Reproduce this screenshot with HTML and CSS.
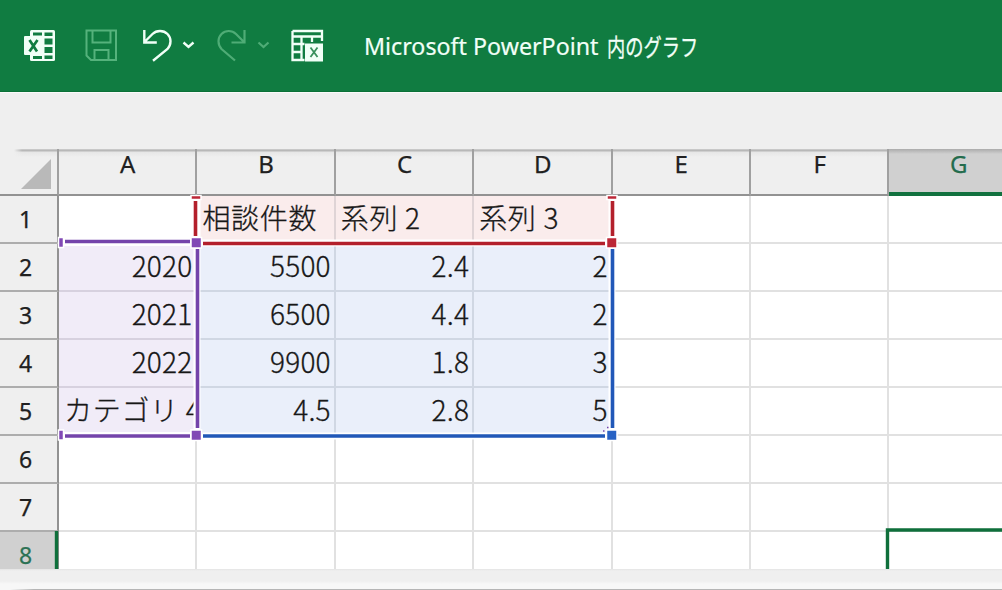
FILE: index.html
```html
<!DOCTYPE html>
<html lang="ja">
<head>
<meta charset="utf-8">
<title>Microsoft PowerPoint 内のグラフ</title>
<link rel="stylesheet" href="styles.css">
</head>
<body>
<div class="window">
  <header class="titlebar">
    <svg class="tools" width="340" height="91" viewBox="0 0 340 91" fill="none">
      <g class="excel">
        <rect x="30" y="30" width="25" height="31" rx="1.5" fill="#f1fff7"/>
        <path d="M33 32.5h9v3h-9zM44.500 32.500h8v3.500h-8zM44.500 38.500h8v6h-8zM44.500 47h8v6h-8zM44.500 55.500h8v3.500h-8zM33 56h9v3h-9z" fill="#107c41"/>
        <rect x="24" y="36" width="19" height="19" rx="1" fill="#f1fff7"/>
        <path d="M29.500 40l7.500 11.500M37.500 40l-8 11.500" stroke="#107c41" stroke-width="2.700"/>
      </g>
      <path d="M86.500 30.500h29.500v29.500h-25l-4.500-4.500zM92.500 30.500v12h18v-12M94.500 60v-10h14v10" stroke="#55b27c" stroke-width="2"/>
      <g stroke="#f1fff7" stroke-width="2.400">
        <path d="M144.300 30v12.500h12.500M144.500 42l8-8c4-4 11-4 15 0s4 10.500 0 15l-14.500 11.800"/>
        <path d="M183.500 42.500l5 4.500 5-4.500"/>
      </g>
      <g stroke="#4fac76" stroke-width="2.200">
        <path d="M244.500 30v12.500h-13M244 42l-8-8c-4-4-10.500-4-14.500 0s-4 10.500 0 15l13.500 11.500"/>
        <path d="M258.500 42.500l5 4.500 5-4.500"/>
      </g>
      <path d="M292.500 31h29.500v10M292.500 31v29h12M292.500 36.500h29.500M301.500 36.500v23.500M292.500 44h12M292.500 52h10M312 42v-5" stroke="#f1fff7" stroke-width="2.300"/>
      <rect x="305" y="43.500" width="18" height="18" fill="#f1fff7"/>
      <path d="M310.500 47.500l7 9.500M317.500 47.500l-7 9.500" stroke="#38905c" stroke-width="1.800"/>
    </svg>
    <h1 class="title"><span class="title-latin">Microsoft PowerPoint</span><span class="title-kana">内のグラフ</span></h1>
  </header>
  <div class="band"></div>
  <main class="sheet">
    <div class="corner"><svg width="30" height="30" viewBox="0 0 30 30"><path d="M0 30L30 0v30z" fill="#b9b9b9"/></svg></div>
    <div class="col">A</div><div class="col">B</div><div class="col">C</div><div class="col">D</div><div class="col">E</div><div class="col">F</div><div class="col active last">G</div>
    <div class="row">1</div><div class="cell"></div><div class="cell red text">相談件数</div><div class="cell red text">系列 2</div><div class="cell red text">系列 3</div><div class="cell"></div><div class="cell"></div><div class="cell open"></div>
    <div class="row">2</div><div class="cell purple">2020</div><div class="cell blue">5500</div><div class="cell blue">2.4</div><div class="cell blue">2</div><div class="cell"></div><div class="cell"></div><div class="cell open"></div>
    <div class="row">3</div><div class="cell purple">2021</div><div class="cell blue">6500</div><div class="cell blue">4.4</div><div class="cell blue">2</div><div class="cell"></div><div class="cell"></div><div class="cell open"></div>
    <div class="row">4</div><div class="cell purple">2022</div><div class="cell blue">9900</div><div class="cell blue">1.8</div><div class="cell blue">3</div><div class="cell"></div><div class="cell"></div><div class="cell open"></div>
    <div class="row">5</div><div class="cell purple text">カテゴリ 4</div><div class="cell blue">4.5</div><div class="cell blue">2.8</div><div class="cell blue">5</div><div class="cell"></div><div class="cell"></div><div class="cell open"></div>
    <div class="row">6</div><div class="cell"></div><div class="cell"></div><div class="cell"></div><div class="cell"></div><div class="cell"></div><div class="cell"></div><div class="cell open"></div>
    <div class="row">7</div><div class="cell"></div><div class="cell"></div><div class="cell"></div><div class="cell"></div><div class="cell"></div><div class="cell"></div><div class="cell open"></div>
    <div class="row active">8</div><div class="cell"></div><div class="cell"></div><div class="cell"></div><div class="cell"></div><div class="cell"></div><div class="cell"></div><div class="cell open"></div>
    <svg class="ranges" width="1002" height="420" viewBox="0 149 1002 420" fill="none">
      <path d="M59 242.500H197M59 435.500H197M197 197V436M197 243H612V436H197M612 197V243" stroke="#fff" stroke-width="7"/>
      <path d="M195.500 201V236M203 243.500H605M612.500 201V236" stroke="#b3202c" stroke-width="3.600"/>
      <path d="M203 436H605M612.500 249V428" stroke="#2158b8" stroke-width="3.600"/>
      <path d="M65 241.500H190M65 436H190M197.500 249V428" stroke="#7444aa" stroke-width="3.600"/>
      <g stroke="#fff" stroke-width="1.500">
        <path d="M191 195.500h10v4h-10zM607 195.500h10v4h-10zM606.500 237.500h10.500v10.500h-10.500z" fill="#bc2737"/>
        <path d="M58.500 237.500h5v10h-5zM58.500 430h5v10h-5zM191 237.500h10.500v10.500h-10.500zM191 430h10.500v10.500h-10.500z" fill="#8149b5"/>
        <path d="M606.500 430h10.500v10.500h-10.500z" fill="#2862c4"/>
      </g>
      <path d="M603 431h1.500M607 427.500h1.500" stroke="#7444aa" stroke-width="1.500"/>
      <path d="M887.500 570V530H1002" stroke="#0f6f3b" stroke-width="3.400"/>
      <path d="M56.500 531V569" stroke="#0f6f3b" stroke-width="3.400"/>
    </svg>
  </main>
  <footer class="bottom"></footer>
</div>
</body>
</html>
```
FILE: styles.css
```css
* { box-sizing: border-box; }
body { margin: 0; overflow: hidden; background: #efefef; }
.window {
  width: 1002px;
  height: 590px;
  display: flex;
  flex-direction: column;
  overflow: hidden;
  font-family: "Noto Sans", "Noto Sans CJK JP", sans-serif;
}
.titlebar {
  flex: 0 0 92px;
  display: flex;
  align-items: center;
  background: #107c41;
  border-bottom: 1px solid #0b7137;
}
.tools { flex: none; }
.title {
  display: flex;
  margin: 0 0 0 24px;
  font-size: 24px;
  line-height: 36px;
  font-weight: 400;
  color: #f1fff7;
  white-space: nowrap;
}
.title-latin { flex: 0 0 243px; transform: scaleX(0.968); transform-origin: left; -webkit-text-stroke: 0.2px; }
.title-kana { font-family: "Noto Sans CJK JP", sans-serif; transform: scaleX(0.76); transform-origin: left; -webkit-text-stroke: 0.3px; }
.band { flex: 0 0 57px; background: #efefef; border-top: 1px solid #fafafa; }
.sheet {
  position: relative;
  flex: 0 0 420px;
  display: grid;
  grid-template-columns: 59px repeat(6, 138.4px) 1fr;
  grid-template-rows: 46.6px repeat(8, 48.1px);
  overflow: hidden;
  background: #fff;
}
.corner, .col {
  background: linear-gradient(#d8d8d8 0, #b8b8b8 1px, #b8b8b8 2px, #e6e6e6 3px, #efefef 8px);
  border-right: 2px solid #a0a0a0;
  border-bottom: 2px solid #929292;
}
.corner {
  display: flex;
  align-items: flex-end;
  padding: 0 0 5px 21px;
  background: linear-gradient(90deg, #efefef 14px, transparent 22px), linear-gradient(#d8d8d8 0, #b8b8b8 1px, #b8b8b8 2px, #e6e6e6 3px, #efefef 8px);
}
.col {
  text-align: center;
  font-size: 24px;
  line-height: 30px;
  color: #202020;
  -webkit-text-stroke: 0.25px;
}
.col:not(.last) { padding: 0 0 0 1px; }
.col.active {
  color: #246c4d;
  background: linear-gradient(#ababab, #d0d0d0 5px);
  border-right: 0;
  border-bottom: 4px solid #12713f;
}
.col.last { padding-left: 26px; }
.row {
  display: flex;
  align-items: center;
  justify-content: center;
  padding: 0 6px 0 0;
  font-size: 23px;
  line-height: 30px;
  color: #202020;
  background: #efefef;
  border-right: 2px solid #929292;
  border-bottom: 2px solid #adadad;
  -webkit-text-stroke: 0.25px;
}
.row.active { color: #2c7254; background: #d0d0d0; }
.cell {
  overflow: hidden;
  padding-right: 3px;
  font-family: "Noto Sans CJK JP", sans-serif;
  font-size: 28px;
  font-weight: 300;
  line-height: 42px;
  letter-spacing: 0.2px;
  text-align: right;
  white-space: nowrap;
  color: #171717;
  border-right: 2px solid #e1e1e1;
  border-bottom: 2px solid #e1e1e1;
  -webkit-text-stroke: 0.3px;
}
.cell.open { border-right: 0; }
.cell.text { text-align: left; padding: 0 0 0 5px; font-size: 28px; letter-spacing: 0.7px; }
.red { background: #faecec; border-right-color: #dfd4d6; }
.blue { background: #eaeffa; border-color: #d0d7e3; }
.purple { background: #f1ecf8; border-color: #d7d1df; }
.ranges { position: absolute; left: 0; top: 0; }
.bottom {
  flex: 1;
  background:
    linear-gradient(90deg, #f7f7f7 10px, #b5b5b5 34px) 0 100% / 100% 1px no-repeat,
    linear-gradient(#e4e4e4 0, #efefef 2px, #efefef 12px, #f7f7f7 15px);
}
```
